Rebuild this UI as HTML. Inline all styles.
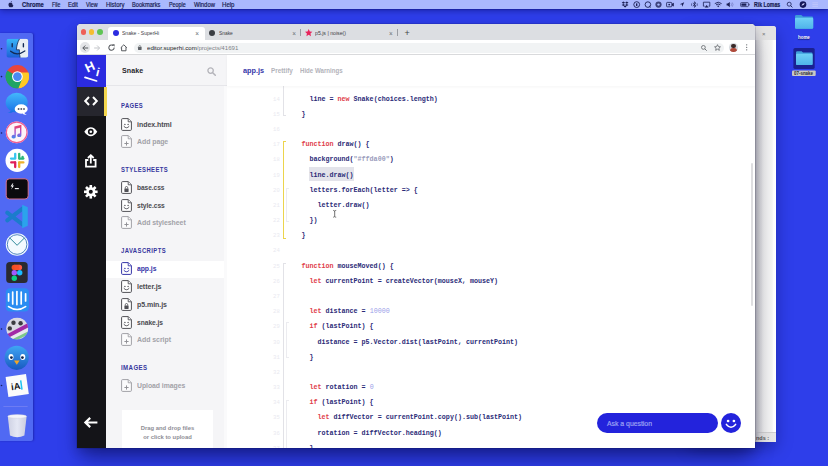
<!DOCTYPE html>
<html lang="en">
<head>
<meta charset="utf-8">
<title>Snake - SuperHi</title>
<style>
*{box-sizing:border-box;margin:0;padding:0}
html,body{width:828px;height:466px;overflow:hidden}
body{position:relative;background:#2e3eea;font-family:"Liberation Sans",sans-serif;color:#222;-webkit-font-smoothing:antialiased}
.abs{position:absolute}
svg{position:absolute;overflow:visible}
/* ---------- menu bar ---------- */
#menubar{position:absolute;left:0;top:0;width:828px;height:8.6px;background:#aab8fd;box-shadow:0 .5px 1.5px rgba(0,0,70,.5),0 2px 6px rgba(0,0,80,.4);z-index:5}
#menubar span{position:absolute;top:-.4px;height:9px;line-height:9px;font-size:6.4px;color:#171b50;white-space:nowrap;-webkit-text-stroke:.18px #171b50}
#menubar span.b{font-weight:bold}

.dl{position:absolute;font-size:5.6px;line-height:7.6px;font-weight:bold;white-space:nowrap}
/* ---------- dock ---------- */
#dock{position:absolute;left:0;top:33px;width:32.8px;height:407.6px;background:#5069f3;border-radius:0 2px 2px 0;box-shadow:.5px 0 2px rgba(0,0,90,.35)}
.dot{position:absolute;left:1px;width:1.6px;height:1.6px;border-radius:50%;background:#151a55}
/* ---------- windows ---------- */
#backwin{position:absolute;left:690px;top:26px;width:86px;height:416px;background:#ececec;border-radius:3px 3px 0 0;box-shadow:0 6px 16px rgba(5,8,60,.35)}

#bwtab{position:absolute;left:0;top:0;width:86px;height:14px;background:#e3e3e3;border-radius:3px 3px 0 0}
#bwtab span{position:absolute;left:72px;top:4px;font-size:6px;line-height:8px;color:#777}
#bwbody{position:absolute;left:0;top:14px;width:86px;height:402px;background:linear-gradient(90deg,#cdcdcd 0,#cdcdcd 65.5px,#d8d8d8 67px,#ededed 74px,#f4f4f4 82px,#fdfdfd 83.5px,#fff 86px)}
#bwstat{position:absolute;left:0;top:406px;width:86px;height:10px;background:linear-gradient(90deg,#ccc 0,#ccc 66px,#e2e2e2 70px,#e8e8e8 86px);border-top:.5px solid #cfcfcf}
#bwstat span{position:absolute;left:66px;top:1px;font-size:5.5px;line-height:8px;color:#555;font-weight:bold}
#win{position:absolute;left:76.7px;top:24.4px;width:678.8px;height:423.3px;background:#fff;border-radius:4px 4px 0 0;box-shadow:0 3px 11px rgba(0,0,50,.2),0 14px 20px -4px rgba(0,0,50,.45),0 0 0 .5px rgba(0,0,40,.22);overflow:hidden}
#tabbar{position:absolute;left:0;top:0;width:679px;height:16.2px;background:#dcdee2}
#toolbar{position:absolute;left:0;top:15.6px;width:679px;height:15.1px;background:#fff;border-bottom:1px solid #d9dadc}
.tabt{position:absolute;top:0;height:17px;line-height:19.2px;font-size:5.6px;color:#3c4043;white-space:nowrap}

.tl{position:absolute;top:4.8px;width:5.8px;height:5.8px;border-radius:50%}
#acttab{position:absolute;left:31px;top:3px;width:97.5px;height:13.4px;background:#fff;border-radius:3px 3px 0 0}
.fav{position:absolute;top:6.1px;width:6px;height:6px;border-radius:50%}
.tabx{position:absolute;top:0;height:17px;line-height:20.4px;font-size:6.4px;color:#6a6e73}
.tsep{position:absolute;top:5px;width:.6px;height:7px;background:#9a9da3}
#omni{position:absolute;left:57.6px;top:2.6px;width:590px;height:10px;border-radius:5px;background:#f1f3f4}
#url{position:absolute;left:70px;top:0;height:15px;line-height:15.2px;font-size:6.1px;color:#202124;white-space:nowrap}
#url i{font-style:normal;color:#7d8186}
#avatar{position:absolute;left:652.6px;top:3.2px;width:8.6px;height:8.6px;border-radius:50%;background:#d7dbe0;overflow:hidden}
#avatar i{position:absolute;left:2.2px;top:1px;width:4.2px;height:4.2px;border-radius:50%;background:#3a2a28}
#avatar b{position:absolute;left:1px;top:5px;width:6.6px;height:5px;border-radius:3px 3px 0 0;background:#b04a3a}
/* ---------- app ---------- */
#app{position:absolute;left:0;top:30.7px;width:679px;height:393px;background:#fff;overflow:hidden}
#rail{position:absolute;left:0;top:0;width:29.5px;height:393px;background:#141418}
#logo{position:absolute;left:0;top:0;width:29.8px;height:31.5px;background:#2b2be0}
#railact{position:absolute;left:0;top:31.5px;width:30.8px;height:29.8px;background:#26262e;border-right:3px solid #f3d64e}
#side{position:absolute;left:29.5px;top:0;width:121px;height:393px;background:#f5f5f7}
#sidehead{position:absolute;left:0;top:0;width:121px;height:31px;border-bottom:1px solid #e6e6ea}
#sidescroll{position:absolute;left:118px;top:31px;width:3px;height:362px;background:#fafafb}
.sec{position:absolute;left:15.3px;font-size:7.2px;font-weight:bold;color:#37379e;letter-spacing:.5px;line-height:8px;white-space:nowrap}
.it{position:absolute;margin-top:.4px;left:30.8px;font-size:7.9px;font-weight:bold;color:#4a4a4f;line-height:10px;white-space:nowrap;letter-spacing:-.05px}
.it.add{color:#a2a2a8}
.fi{left:15px;width:11px;height:13px}
#main{position:absolute;left:150.5px;top:0;width:528.5px;height:393px;background:#fff}
#mainhead{position:absolute;left:0;top:0;width:528.5px;height:31px;background:#fff;box-shadow:0 1px 3px rgba(0,0,30,.045);z-index:2}
.mh{position:absolute;top:0;height:31px;line-height:31.4px;font-size:7.4px;font-weight:bold;color:#b3b3ba;white-space:nowrap}

#proj{position:absolute;left:15.5px;top:0;height:31px;line-height:31.4px;font-size:8px;font-weight:bold;color:#26262b;letter-spacing:.1px}
#actrow{position:absolute;left:0;top:205.5px;width:118px;height:17.3px;background:#fff}
.it.act{color:#3535a8}
#drop{position:absolute;left:15.5px;top:355.2px;width:91px;height:40px;background:#fff}
#drop span{position:absolute;left:0;width:91px;text-align:center;font-size:6.2px;line-height:8px;font-weight:bold;color:#8d8d94;white-space:nowrap}
/*FIT*/
#m0{transform:scaleX(0.902);transform-origin:0 50%}
#m1{transform:scaleX(0.815);transform-origin:0 50%}
#m2{transform:scaleX(0.899);transform-origin:0 50%}
#m3{transform:scaleX(0.844);transform-origin:0 50%}
#m4{transform:scaleX(0.930);transform-origin:0 50%}
#m5{transform:scaleX(0.888);transform-origin:0 50%}
#m6{transform:scaleX(0.844);transform-origin:0 50%}
#m7{transform:scaleX(0.919);transform-origin:0 50%}
#m8{transform:scaleX(0.950);transform-origin:0 50%}
#m9{transform:scaleX(0.810);transform-origin:0 50%}
#t0{transform:scaleX(0.904);transform-origin:0 50%}
#t1{transform:scaleX(0.869);transform-origin:0 50%}
#t2{transform:scaleX(0.926);transform-origin:0 50%}
#url{transform:scaleX(0.998);transform-origin:0 50%}
#h0{transform:scaleX(0.925);transform-origin:0 50%}
#h1{transform:scaleX(0.860);transform-origin:0 50%}
#h2{transform:scaleX(0.828);transform-origin:0 50%}
#proj{transform:scaleX(0.885);transform-origin:0 50%}
#s1{transform:scaleX(0.818);transform-origin:0 50%}
#s2{transform:scaleX(0.822);transform-origin:0 50%}
#s3{transform:scaleX(0.822);transform-origin:0 50%}
#s4{transform:scaleX(0.848);transform-origin:0 50%}
#i1{transform:scaleX(0.890);transform-origin:0 50%}
#i2{transform:scaleX(0.877);transform-origin:0 50%}
#i3{transform:scaleX(0.831);transform-origin:0 50%}
#i4{transform:scaleX(0.842);transform-origin:0 50%}
#i5{transform:scaleX(0.878);transform-origin:0 50%}
#i6{transform:scaleX(0.862);transform-origin:0 50%}
#i7{transform:scaleX(0.901);transform-origin:0 50%}
#i8{transform:scaleX(0.888);transform-origin:0 50%}
#i9{transform:scaleX(0.846);transform-origin:0 50%}
#i10{transform:scaleX(0.882);transform-origin:0 50%}
#i11{transform:scaleX(0.869);transform-origin:0 50%}
#d1{transform:scaleX(0.947);transform-origin:50% 50%}
#d2{transform:scaleX(0.949);transform-origin:50% 50%}
#f1{transform:scaleX(0.791);transform-origin:0 50%}
#f2{transform:scaleX(0.793);transform-origin:0 50%}
#aq{transform:scaleX(0.980);transform-origin:0 50%}
/*/FIT*/

.fold{position:absolute;left:56.3px;width:1px;background:#e2e2e7}
.fold i{position:absolute;left:0;width:2.6px;height:1px;background:#e2e2e7}
.fold.y,.fold.y i{background:#ecd44c}
.fold.in{left:59.3px;background:#ececf0}
.fold.in i{background:#ececf0;width:2.5px}
#sel{position:absolute;left:82px;top:111.6px;width:44.6px;height:14.4px;background:#e3e3ea}
#vscroll{position:absolute;left:524.3px;top:108.2px;width:2px;height:142.5px;border-radius:1px;background:#dedee0}

#ask{position:absolute;left:369.5px;top:358px;width:121px;height:20.2px;border-radius:10px;background:#2323dc}
#ask span{position:absolute;left:10.4px;top:0;line-height:22.4px;font-size:7px;color:#9ca1f4;white-space:nowrap;-webkit-text-stroke:.2px #9ca1f4}
#smile{position:absolute;left:493.5px;top:358px;width:20px;height:20px;border-radius:50%;background:#2323dc}
/* code */
#code{position:absolute;left:0;top:0;width:528.5px;height:393px;font-family:"Liberation Mono",monospace;font-weight:bold;font-size:6.7px;color:#2b2b78}
.ln{position:absolute;left:74.2px;height:15.18px;line-height:15.18px;white-space:pre}
.no{position:absolute;left:42.6px;width:10px;text-align:right;height:15.18px;line-height:15.18px;color:#e9e9ef;font-weight:normal;font-size:5.6px}
.k{color:#e0404a}.s{color:#9a9cbc}.n{color:#9aa0e8;font-weight:normal}
</style>
</head>
<body>
<svg width="0" height="0" style="position:absolute"><defs>
<symbol id="f-smile" viewBox="0 0 11 13"><path d="M1.6 .6H7.3L10.4 3.7V11.4Q10.4 12.4 9.4 12.4H1.6Q.6 12.4 .6 11.4V1.6Q.6 .6 1.6 .6Z" fill="#fff" stroke="#505056" stroke-width="1" stroke-linejoin="round"/><path d="M7.2 .7V3.8H10.3" fill="#f5f5f7" stroke="#505056" stroke-width="0.90" stroke-linejoin="round"/><circle cx="3.9" cy="6.5" r=".72" fill="#505056"/><circle cx="7.1" cy="6.5" r=".72" fill="#505056"/><path d="M3 8.5Q5.5 11.3 8 8.5" fill="none" stroke="#505056" stroke-width=".95" stroke-linecap="round"/></symbol>
<symbol id="f-smile-b" viewBox="0 0 11 13"><path d="M1.6 .6H7.3L10.4 3.7V11.4Q10.4 12.4 9.4 12.4H1.6Q.6 12.4 .6 11.4V1.6Q.6 .6 1.6 .6Z" fill="#fff" stroke="#3535a8" stroke-width="1" stroke-linejoin="round"/><path d="M7.2 .7V3.8H10.3" fill="#fff" stroke="#3535a8" stroke-width="0.90" stroke-linejoin="round"/><circle cx="3.9" cy="6.5" r=".72" fill="#3535a8"/><circle cx="7.1" cy="6.5" r=".72" fill="#3535a8"/><path d="M3 8.5Q5.5 11.3 8 8.5" fill="none" stroke="#3535a8" stroke-width=".95" stroke-linecap="round"/></symbol>
<symbol id="f-lock" viewBox="0 0 11 13"><path d="M1.6 .6H7.3L10.4 3.7V11.4Q10.4 12.4 9.4 12.4H1.6Q.6 12.4 .6 11.4V1.6Q.6 .6 1.6 .6Z" fill="#fff" stroke="#505056" stroke-width="1" stroke-linejoin="round"/><path d="M7.2 .7V3.8H10.3" fill="#f5f5f7" stroke="#505056" stroke-width="0.90" stroke-linejoin="round"/><rect x="3.4" y="7.4" width="4.2" height="3.6" rx=".4" fill="#505056"/><path d="M4.3 7.6V6.7A1.2 1.2 0 0 1 6.7 6.7V7.6" fill="none" stroke="#505056" stroke-width=".85"/></symbol>
<symbol id="f-plus" viewBox="0 0 11 13"><path d="M1.6 .6H7.3L10.4 3.7V11.4Q10.4 12.4 9.4 12.4H1.6Q.6 12.4 .6 11.4V1.6Q.6 .6 1.6 .6Z" fill="#fbfbfc" stroke="#9c9ca2" stroke-width="0.95" stroke-linejoin="round"/><path d="M7.2 .7V3.8H10.3" fill="#f5f5f7" stroke="#9c9ca2" stroke-width="0.85" stroke-linejoin="round"/><path d="M5.5 6.4V10.6M3.4 8.5H7.6" stroke="#8e8e94" stroke-width=".95"/></symbol>
</defs></svg>
<!-- MENUBAR -->
<div id="menubar">
<svg style="left:0;top:0;width:828px;height:9px" viewBox="0 0 828 9">
<g fill="#1b1f55" stroke="none">
<!-- apple -->
<path d="M11.2 2.4C11.8 2.3 12.3 1.7 12.3 1C11.7 1.1 11.1 1.6 11.2 2.4ZM12.9 4.1C12.6 3.3 11.9 2.6 11.2 2.9C10.6 2.5 9.2 2.6 8.9 4.2C8.7 5.6 9.6 7.3 10.3 7.3C10.8 7.3 10.9 7 11.4 7C11.9 7 12 7.3 12.5 7.3C13.1 7.2 13.6 6.3 13.8 5.6C13.1 5.4 12.8 4.7 12.9 4.1Z" transform="translate(-.4 0)"/>
<!-- dropbox -->
<path d="M623.4 1.6L625.1 2.7L623.4 3.8L621.7 2.7ZM626.8 1.6L628.5 2.7L626.8 3.8L625.1 2.7ZM623.4 3.9L625.1 5L623.4 6.1L621.7 5ZM626.8 3.9L628.5 5L626.8 6.1L625.1 5ZM625.1 5.5L626.6 6.5L625.1 7.5L623.6 6.5Z"/>
<circle cx="636.7" cy="4.6" r="2.9" fill="none" stroke="#1b1f55" stroke-width=".9"/><rect x="636" y="3.2" width="1.4" height="2.8" rx=".5"/>
<circle cx="647.9" cy="4.6" r="2.8" fill="none" stroke="#1b1f55" stroke-width=".9"/><path d="M649.2 6L650.6 7.4" stroke="#1b1f55" stroke-width=".9"/>
<circle cx="658.5" cy="4.6" r="3.1" fill="#3d427c"/><circle cx="658.5" cy="4.6" r="1.2" fill="#aab8fd"/>
<rect x="666.6" y="2.4" width="5.2" height="4.4" rx=".7" fill="none" stroke="#1b1f55" stroke-width=".8"/><path d="M672 3.8L673.8 2.8V6.4L672 5.4Z"/><circle cx="669.2" cy="4.6" r=".9"/>
<path d="M684.2 2.2L679.8 4.2L681.9 4.6L682.3 6.8Z"/>
<path d="M692.8 3L696 6L694.4 7.4V1.8L696 3.2L692.8 6.2" fill="none" stroke="#1b1f55" stroke-width=".7"/><path d="M691.6 3.4V5.8M697.2 3.4V5.8" stroke="#1b1f55" stroke-width=".6" fill="none"/>
<path d="M704.6 6.2H703.4V2.2H709.8V6.2H708.6" fill="none" stroke="#1b1f55" stroke-width=".8"/><path d="M706.6 5L708.6 7.4H704.6Z"/>
<path d="M714.8 3.6Q718.2 .8 721.6 3.6M716 4.9Q718.2 3.1 720.4 4.9" fill="none" stroke="#1b1f55" stroke-width=".9"/><path d="M717.1 6L718.2 7.2L719.3 6Q718.2 5.2 717.1 6Z"/>
<path d="M726.6 3.6H727.8L729.8 2V7.2L727.8 5.6H726.6Z"/><path d="M731 3.2Q732.2 4.6 731 6M732.2 2.4Q734 4.6 732.2 6.8" fill="none" stroke="#6a70b8" stroke-width=".6"/>
<rect x="740.6" y="2.6" width="7.8" height="4" rx=".8" fill="none" stroke="#1b1f55" stroke-width=".7"/><rect x="741.4" y="3.4" width="5" height="2.4" rx=".3"/><rect x="748.8" y="3.8" width=".7" height="1.6"/>
<circle cx="789.2" cy="4.2" r="2" fill="none" stroke="#1b1f55" stroke-width=".8"/><path d="M790.6 5.6L792.4 7.4" stroke="#1b1f55" stroke-width=".9"/>
<circle cx="803" cy="4.6" r="3.3" fill="#14175a"/><path d="M801.4 5.4Q803 2.6 804.8 3.6Q803.6 5.8 801.4 5.4Z" fill="#cfd3ff"/>
<path d="M812.4 2.8H818M812.4 4.6H818M812.4 6.4H818" stroke="#c3c8fa" stroke-width=".8" fill="none"/>
</g></svg>
<span id="m0" class="b" style="left:21.7px">Chrome</span>
<span id="m1" style="left:51.6px">File</span>
<span id="m2" style="left:67.8px">Edit</span>
<span id="m3" style="left:85.8px">View</span>
<span id="m4" style="left:105.5px">History</span>
<span id="m5" style="left:131.9px">Bookmarks</span>
<span id="m6" style="left:168.7px">People</span>
<span id="m7" style="left:193.6px">Window</span>
<span id="m8" style="left:221.7px">Help</span>
<span id="m9" class="b" style="left:753.6px">Rik Lomas</span>
</div>
<!-- DESKTOP ICONS -->
<svg style="left:785px;top:10px;width:43px;height:70px" viewBox="785 10 43 70">
<defs><linearGradient id="gFold" x1="0" y1="0" x2="0" y2="1"><stop offset="0" stop-color="#6fd0f6"/><stop offset="1" stop-color="#4fb4ea"/></linearGradient></defs>
<path d="M795 16.4Q795 15 796.4 15H801.4L803 16.6H811.8Q813.2 16.6 813.2 18V27.4Q813.2 28.8 811.8 28.8H796.4Q795 28.8 795 27.4Z" fill="#3f9fdc"/><rect x="795" y="17.8" width="18.2" height="11" rx="1.2" fill="url(#gFold)"/>
<rect x="793.4" y="47.9" width="21.3" height="21" rx="1.6" fill="#1a2192"/>
<path d="M796 52.4Q796 51.2 797.2 51.2H801.6L803 52.6H811.4Q812.6 52.6 812.6 53.8V63.8Q812.6 65 811.4 65H797.2Q796 65 796 63.8Z" fill="#3f9fdc"/><rect x="796" y="53.8" width="16.6" height="11.2" rx="1.1" fill="url(#gFold)"/>
<rect x="792" y="70.4" width="23.7" height="5.5" rx="1" fill="#c9c9c4"/>
</svg>
<span id="f1" class="dl" style="left:798.2px;top:33.5px;color:#fff;text-shadow:0 .5px 1px rgba(0,0,40,.7)">home</span>
<span id="f2" class="dl" style="left:794.4px;top:69.9px;color:#2c2e36">07-snake</span>
<!-- DOCK -->
<div id="dock"></div>
<svg id="dockicons" style="left:0;top:0;width:40px;height:466px" viewBox="0 0 40 466">
<defs>
<linearGradient id="gFinder" x1="0" y1="0" x2="0" y2="1"><stop offset="0" stop-color="#38b6f8"/><stop offset="1" stop-color="#1c5fd6"/></linearGradient>
<linearGradient id="gMsg" x1="0" y1="0" x2="0" y2="1"><stop offset="0" stop-color="#43b8fc"/><stop offset="1" stop-color="#1a72e6"/></linearGradient>
<linearGradient id="gNote" x1="0" y1="0" x2="0" y2="1"><stop offset="0" stop-color="#f0405a"/><stop offset=".55" stop-color="#b050d0"/><stop offset="1" stop-color="#3a8cf0"/></linearGradient>
<linearGradient id="gBird" x1="0" y1="0" x2="0" y2="1"><stop offset="0" stop-color="#3fa6f4"/><stop offset="1" stop-color="#1858c0"/></linearGradient>
<linearGradient id="gTrash" x1="0" y1="0" x2="1" y2="0"><stop offset="0" stop-color="#d4d6e2"/><stop offset=".5" stop-color="#eceef4"/><stop offset="1" stop-color="#d0d2de"/></linearGradient>
<clipPath id="cFinder"><rect x="6.4" y="38.7" width="21.9" height="19" rx="2.6"/></clipPath>
<clipPath id="cReel"><circle cx="17.1" cy="328.4" r="11"/></clipPath>
</defs>
<!-- running dots -->
<g fill="#161c60"><circle cx="1.5" cy="48.7" r=".8"/><circle cx="1.5" cy="76.6" r=".8"/><circle cx="1.5" cy="133" r=".8"/><circle cx="1.5" cy="329" r=".8"/><circle cx="1.5" cy="385.5" r=".8"/></g>
<!-- finder -->
<g clip-path="url(#cFinder)"><rect x="6.4" y="38.7" width="21.9" height="19" fill="url(#gFinder)"/><path d="M19.6 38.7C17.6 42 16.6 46 16.4 49.8H19.4C19.2 52.6 19.5 55.4 20.2 57.7H28.3V38.7Z" fill="#e9eef4"/><path d="M10.6 51.2Q17 56.6 24.8 51" fill="none" stroke="#132a55" stroke-width="1.3" stroke-linecap="round"/><path d="M12.2 43.8V46.8M23.4 43.8V46.8" stroke="#132a55" stroke-width="1.4" stroke-linecap="round"/><path d="M19.6 38.7C17.6 42 16.6 46 16.4 49.8H19.4C19.2 52.6 19.5 55.4 20.2 57.7" fill="none" stroke="#132a55" stroke-width=".8"/></g>
<!-- chrome -->
<g transform="translate(17.4 76.6)"><circle r="11.6" fill="#e8453c"/><path d="M0 0L-10.05 -5.8A11.6 11.6 0 0 0 0 11.6Z" fill="#1fa463" transform="rotate(0)"/><path d="M-10.05 -5.8A11.6 11.6 0 0 0 1.2 11.54L5.6 3.2L0 0Z" fill="#1fa463"/><path d="M1.2 11.54A11.6 11.6 0 0 0 10.9 -4H0L4.6 2.7Z" fill="#fdc926"/><path d="M1.2 11.54L5.4 2.6L10.9 -4A11.6 11.6 0 0 1 1.2 11.54Z" fill="#fdc926"/><circle r="5.4" fill="#fff"/><circle r="4.3" fill="#4a8af4"/></g>
<!-- messages -->
<ellipse cx="16.7" cy="102.6" rx="11" ry="9.8" fill="url(#gMsg)"/><path d="M11 110.4Q9.8 112.6 7.6 113Q11.4 113.4 13.6 111.4Z" fill="#1a72e6"/>
<ellipse cx="21.2" cy="109" rx="6.5" ry="4.7" fill="#fff"/><path d="M24 112.4Q25 114.4 26.8 114.6Q24 115 22.4 113.4Z" fill="#fff"/>
<g fill="#555a66"><circle cx="18.6" cy="109" r=".95"/><circle cx="21.3" cy="109" r=".95"/><circle cx="24" cy="109" r=".95"/></g>
<!-- itunes -->
<circle cx="16.7" cy="132.4" r="10.9" fill="#fdf4f8"/><circle cx="16.7" cy="132.4" r="10.3" fill="none" stroke="#ee5d92" stroke-width="1.2"/>
<path d="M14.4 126.4L21.4 124.8V135.2A2.1 1.8 0 1 1 20 133.6V127.8L15.8 128.8V136.6A2.1 1.8 0 1 1 14.4 135Z" fill="url(#gNote)"/>
<!-- slack -->
<circle cx="17.1" cy="160.4" r="11.6" fill="#fff"/>
<g stroke-width="2.3" stroke-linecap="round" fill="none"><path d="M15.2 153.8V158" stroke="#36c5f0"/><path d="M11 158.6H15.2" stroke="#36c5f0"/><path d="M19.2 153.8V158.6" stroke="#2eb67d"/><path d="M19.4 158.6H23.4" stroke="#2eb67d" transform="translate(0 -3.6) translate(0 3.6)"/><path d="M22.6 156.8V158.2" stroke="#2eb67d"/><path d="M11.2 162.4H15" stroke="#e01e5a"/><path d="M15.2 162.4V167" stroke="#e01e5a"/><path d="M19.2 162.6V167" stroke="#ecb22e"/><path d="M19.2 162.4H23.4" stroke="#ecb22e"/></g>
<!-- terminal -->
<rect x="6.2" y="178.8" width="22" height="20.2" rx="3.2" fill="#0b0b0e" stroke="#d6728e" stroke-width="1"/>
<path d="M12.4 183.4L10.6 186.6H12.2L11.2 189.4L14 185.6H12.2L13.4 183.4Z" fill="#fff"/><path d="M14.8 188.6H18.8" stroke="#fff" stroke-width="1.1"/>
<!-- vscode -->
<path d="M22.8 208.4L7.2 220.4M22.8 224.6L7.2 212.6" stroke="#1b7ccc" stroke-width="4" stroke-linecap="round" fill="none"/><path d="M22.2 204.8L27.8 207.2V225.8L22.2 228.2Z" fill="#2ba3ec"/><path d="M22.2 212.6L17 216.5L22.2 220.4Z" fill="#5069f3"/>
<!-- airmail -->
<circle cx="17.1" cy="244.5" r="11.3" fill="#f3faff"/><circle cx="17.1" cy="244.5" r="9.8" fill="none" stroke="#3f78b8" stroke-width=".9"/><path d="M9.4 237.6L17.1 245.3L24.8 237.6" fill="none" stroke="#2f8a9a" stroke-width="1"/>
<!-- figma -->
<rect x="6.2" y="261.9" width="21.5" height="21.2" rx="3.6" fill="#2a2a30"/>
<circle cx="14.3" cy="267.4" r="2.7" fill="#f24e1e"/><circle cx="19.4" cy="267.4" r="2.7" fill="#ff5a45"/><rect x="14.3" y="264.7" width="5.1" height="5.4" fill="#f7502c"/><circle cx="14.3" cy="272.8" r="2.7" fill="#a259ff"/><circle cx="19.7" cy="272.8" r="2.7" fill="#1abcfe"/><circle cx="14.3" cy="278.2" r="2.7" fill="#0acf83"/>
<!-- intercom -->
<rect x="5.8" y="288.2" width="23.2" height="23.2" rx="4.2" fill="#2a8df2"/>
<g stroke="#fff" stroke-width="1.7" stroke-linecap="round" fill="none"><path d="M8.6 293.8V301"/><path d="M12.7 292V304"/><path d="M16.9 291.6V304.6"/><path d="M21.2 292V304"/><path d="M25.6 293.8V301"/><path d="M8.6 306.6Q17.1 312.4 25.6 306.6"/></g>
<!-- film reel -->
<g clip-path="url(#cReel)"><circle cx="17.1" cy="328.4" r="11" fill="#d9d9e2"/><path d="M5 335.4L29 322.6V327L5 339.6Z" fill="#a22aa6"/><path d="M5 340L29 327.4V331L5 343.6Z" fill="#e8e8ee"/><path d="M8 341.4L29 331V334L10 343.6Z" fill="#7cc88a"/><path d="M12 343L29 334.6V337.4L14 345Z" fill="#9ad0e0"/></g>
<g fill="#3c3c40"><circle cx="13.5" cy="322.8" r="2.2"/><circle cx="20.6" cy="323.3" r="2.2"/><circle cx="9.8" cy="328.4" r="2.2"/></g>
<!-- tweetbot -->
<circle cx="16.7" cy="357.8" r="12.1" fill="url(#gBird)"/><ellipse cx="11" cy="357" rx="2.5" ry="3" fill="#fff"/><ellipse cx="22.8" cy="357" rx="2.5" ry="3" fill="#fff"/><circle cx="11.4" cy="357.6" r="1.4" fill="#10244a"/><circle cx="22.4" cy="357.6" r="1.4" fill="#10244a"/><path d="M14 360.6H19.6L16.8 364.8Z" fill="#f5a623"/>
<!-- iA -->
<g transform="rotate(-8 17.2 385.5)"><rect x="6.9" y="375.4" width="20.6" height="20.2" fill="#fbfbfb"/><text x="11" y="389.4" font-family="Liberation Sans, sans-serif" font-weight="bold" font-size="9.2" fill="#111">iA</text><rect x="20.6" y="381" width="1.5" height="9.2" fill="#1ec3f0"/></g>
<!-- separator & trash -->
<rect x="3.4" y="406.1" width="24.2" height=".7" fill="#7a86f2"/>
<path d="M7.8 416.4Q17.2 413.6 26.6 416.4L24.4 435.4Q17.2 439 10 435.4Z" fill="url(#gTrash)" opacity=".95"/><ellipse cx="17.2" cy="416.4" rx="9.4" ry="1.9" fill="#f4f5fa" stroke="#c9cbd8" stroke-width=".4"/>
</svg>
<!-- BACK WINDOW -->
<div id="backwin"><div id="bwtab"><span>×</span></div><div id="bwbody"></div><div id="bwstat"><span>nds :</span></div></div>
<!-- MAIN WINDOW -->
<div id="win">
<div id="tabbar">
<div class="tl" style="left:4px;background:#ee5f57"></div><div class="tl" style="left:12px;background:#f5bd30"></div><div class="tl" style="left:20.1px;background:#5fc554"></div>
<div id="acttab"></div>
<div class="fav" style="left:36px;background:#2b2be0"></div>
<span id="t0" class="tabt" style="left:45.6px">Snake - SuperHi</span>
<span class="tabx" style="left:118.5px">×</span>
<div class="fav" style="left:132.8px;background:#3a3d42"></div>
<span id="t1" class="tabt" style="left:142px">Snake</span>
<span class="tabx" style="left:215.5px">×</span>
<div class="tsep" style="left:223px"></div>
<svg style="left:228.4px;top:5px;width:7.4px;height:7.2px" viewBox="0 0 10 9.6"><path d="M5 0L6.5 3.3L10 3.7L7.4 6.1L8.1 9.6L5 7.8L1.9 9.6L2.6 6.1L0 3.7L3.5 3.3Z" fill="#e8245c"/></svg>
<span id="t2" class="tabt" style="left:238.7px">p5.js | noise()</span>
<span class="tabx" style="left:312.2px">×</span>
<div class="tsep" style="left:320.4px"></div>
<span class="tabx" style="left:327.8px;font-size:9px;line-height:19.4px;color:#44474b">+</span>
</div>
<div id="toolbar">
<div style="position:absolute;left:3.2px;top:2.4px;width:10.4px;height:10.4px;border-radius:50%;background:#e4e5e8"></div>
<svg style="left:5.2px;top:4.6px;width:6.4px;height:6px" viewBox="0 0 6.4 6"><path d="M6.2 3H.9M3.3 .5L.8 3L3.3 5.5" fill="none" stroke="#55585d" stroke-width="1"/></svg>
<svg style="left:17.8px;top:4.6px;width:6.4px;height:6px" viewBox="0 0 6.4 6"><path d="M.2 3H5.5M3.1 .5L5.6 3L3.1 5.5" fill="none" stroke="#c3c5c9" stroke-width="1"/></svg>
<svg style="left:31.8px;top:4.2px;width:7.2px;height:7.2px" viewBox="0 0 7 7"><path d="M6 3.5A2.6 2.6 0 1 1 5.1 1.6" fill="none" stroke="#55585d" stroke-width="1"/><path d="M3.9 .2H6.4V2.7Z" fill="#55585d"/></svg>
<svg style="left:43px;top:4px;width:7.6px;height:7.4px" viewBox="0 0 7.6 7.4"><path d="M.7 3.8L3.8 .8L6.9 3.8M1.6 3.2V6.8H6V3.2" fill="none" stroke="#55585d" stroke-width="1"/></svg>
<div id="omni"></div>
<svg style="left:61.3px;top:5px;width:3.6px;height:5px" viewBox="0 0 3.6 5"><rect x="0" y="2" width="3.6" height="3" rx=".4" fill="#5f6368"/><path d="M.8 2.2V1.6A1 1 0 0 1 2.8 1.6V2.2" fill="none" stroke="#5f6368" stroke-width=".7"/></svg>
<span id="url">editor.superhi.com<i>/projects/41691</i></span>
<svg style="left:624.6px;top:4.6px;width:6px;height:6px" viewBox="0 0 6 6"><circle cx="2.4" cy="2.4" r="1.9" fill="none" stroke="#5f6368" stroke-width=".8"/><path d="M3.8 3.8L5.7 5.7" stroke="#5f6368" stroke-width=".9"/></svg>
<svg style="left:637.4px;top:4px;width:7px;height:6.8px" viewBox="0 0 10 9.6"><path d="M5 .9L6.3 3.7L9.2 4L7 6L7.6 9L5 7.4L2.4 9L3 6L.8 4L3.7 3.7Z" fill="none" stroke="#5f6368" stroke-width="1.1" stroke-linejoin="round"/></svg>
<div id="avatar"><i></i><b></b></div>
<svg style="left:669.8px;top:4.4px;width:1.4px;height:6.6px" viewBox="0 0 1.4 6.6"><circle cx=".7" cy=".8" r=".65" fill="#5f6368"/><circle cx=".7" cy="3.3" r=".65" fill="#5f6368"/><circle cx=".7" cy="5.8" r=".65" fill="#5f6368"/></svg>
</div>
<div id="app">
<div id="main">
<div id="code">
<!--CODE-->
<div class="fold" style="top:31px;height:30px"><i style="bottom:0"></i></div>
<div class="fold y" style="top:85.7px;height:98.3px"><i style="top:0"></i><i style="bottom:0"></i></div>
<div class="fold" style="top:207.5px;height:186px"><i style="top:0"></i></div>
<div class="fold in" style="top:133px;height:34px"><i style="top:0"></i><i style="bottom:0"></i></div>
<div class="fold in" style="top:267px;height:36.4px"><i style="top:0"></i><i style="bottom:0"></i></div>
<div class="fold in" style="top:345px;height:50px"><i style="top:0"></i></div>
<div id="sel"></div>
<svg style="left:106.2px;top:155.2px;width:3.4px;height:7.6px" viewBox="0 0 3.4 7.6"><path d="M.2 .4Q1.2 .4 1.7 1Q2.2 .4 3.2 .4M.2 7.2Q1.2 7.2 1.7 6.6Q2.2 7.2 3.2 7.2M1.7 1V6.6" fill="none" stroke="#333" stroke-width=".7"/></svg>

<div id="vscroll"></div>
<div class="no" style="top:36.61px">14</div><div class="ln" style="top:36.61px">  line = <span class="k">new</span> Snake(choices.length)</div>
<div class="no" style="top:51.79px">15</div><div class="ln" style="top:51.79px">}</div>
<div class="no" style="top:66.97px">16</div>
<div class="no" style="top:82.15px">17</div><div class="ln" style="top:82.15px"><span class="k">function</span> draw() {</div>
<div class="no" style="top:97.33px">18</div><div class="ln" style="top:97.33px">  background(<span class="s">"#ffda00"</span>)</div>
<div class="no" style="top:112.51px">19</div><div class="ln" style="top:112.51px">  line.draw()</div>
<div class="no" style="top:127.69px">20</div><div class="ln" style="top:127.69px">  letters.forEach(letter =&gt; {</div>
<div class="no" style="top:142.87px">21</div><div class="ln" style="top:142.87px">    letter.draw()</div>
<div class="no" style="top:158.05px">22</div><div class="ln" style="top:158.05px">  })</div>
<div class="no" style="top:173.23px">23</div><div class="ln" style="top:173.23px">}</div>
<div class="no" style="top:188.41px">24</div>
<div class="no" style="top:203.59px">25</div><div class="ln" style="top:203.59px"><span class="k">function</span> mouseMoved() {</div>
<div class="no" style="top:218.77px">26</div><div class="ln" style="top:218.77px">  <span class="k">let</span> currentPoint = createVector(mouseX, mouseY)</div>
<div class="no" style="top:233.95px">27</div>
<div class="no" style="top:249.13px">28</div><div class="ln" style="top:249.13px">  <span class="k">let</span> distance = <span class="n">10000</span></div>
<div class="no" style="top:264.31px">29</div><div class="ln" style="top:264.31px">  <span class="k">if</span> (lastPoint) {</div>
<div class="no" style="top:279.49px">30</div><div class="ln" style="top:279.49px">    distance = p5.Vector.dist(lastPoint, currentPoint)</div>
<div class="no" style="top:294.67px">31</div><div class="ln" style="top:294.67px">  }</div>
<div class="no" style="top:309.85px">32</div>
<div class="no" style="top:325.03px">33</div><div class="ln" style="top:325.03px">  <span class="k">let</span> rotation = <span class="n">0</span></div>
<div class="no" style="top:340.21px">34</div><div class="ln" style="top:340.21px">  <span class="k">if</span> (lastPoint) {</div>
<div class="no" style="top:355.39px">35</div><div class="ln" style="top:355.39px">    <span class="k">let</span> diffVector = currentPoint.copy().sub(lastPoint)</div>
<div class="no" style="top:370.57px">36</div><div class="ln" style="top:370.57px">    rotation = diffVector.heading()</div>
<div class="no" style="top:385.75px">37</div><div class="ln" style="top:385.75px">  }</div>
<!--/CODE-->
</div>
<div id="ask"><span id="aq">Ask a question</span></div>
<div id="smile"><svg style="left:0;top:0;width:20px;height:20px" viewBox="0 0 20 20"><circle cx="7.1" cy="8" r="1.35" fill="#fff"/><circle cx="12.9" cy="8" r="1.35" fill="#fff"/><path d="M5.4 11.4Q10 17 14.6 11.4" fill="none" stroke="#fff" stroke-width="1.5" stroke-linecap="round"/></svg></div>
<div id="mainhead">
<span id="h0" class="mh" style="left:16px;color:#3535a8;font-weight:bold;font-size:7.9px">app.js</span>
<span id="h1" class="mh" style="left:44.3px">Prettify</span>
<span id="h2" class="mh" style="left:73.2px">Hide Warnings</span>
</div>
</div>
<div id="side">
<div id="sidescroll"></div>
<div id="sidehead"><span id="proj">Snake</span>
<svg style="left:101px;top:11.5px;width:9px;height:9px" viewBox="0 0 9 9"><circle cx="3.6" cy="3.6" r="2.7" fill="none" stroke="#b4b4ba" stroke-width="1.3"/><path d="M5.7 5.7L8.3 8.3" stroke="#b4b4ba" stroke-width="1.5" stroke-linecap="round"/></svg>
</div>
<div id="s1" class="sec" style="top:46.7px">PAGES</div>
<svg class="fi" style="top:62.5px" viewBox="0 0 11 13"><use href="#f-smile"/></svg><div id="i1" class="it " style="top:64.1px">index.html</div>
<svg class="fi" style="top:80.1px" viewBox="0 0 11 13"><use href="#f-plus"/></svg><div id="i2" class="it add" style="top:81.7px">Add page</div>
<div id="s2" class="sec" style="top:110.7px">STYLESHEETS</div>
<svg class="fi" style="top:125.9px" viewBox="0 0 11 13"><use href="#f-lock"/></svg><div id="i3" class="it " style="top:127.5px">base.css</div>
<svg class="fi" style="top:143.7px" viewBox="0 0 11 13"><use href="#f-smile"/></svg><div id="i4" class="it " style="top:145.3px">style.css</div>
<svg class="fi" style="top:161.4px" viewBox="0 0 11 13"><use href="#f-plus"/></svg><div id="i5" class="it add" style="top:163.0px">Add stylesheet</div>
<div id="s3" class="sec" style="top:191.7px">JAVASCRIPTS</div>
<div id="actrow"></div>
<svg class="fi" style="top:207.1px" viewBox="0 0 11 13"><use href="#f-smile-b"/></svg><div id="i6" class="it act" style="top:208.7px">app.js</div>
<svg class="fi" style="top:224.9px" viewBox="0 0 11 13"><use href="#f-smile"/></svg><div id="i7" class="it " style="top:226.5px">letter.js</div>
<svg class="fi" style="top:242.6px" viewBox="0 0 11 13"><use href="#f-lock"/></svg><div id="i8" class="it " style="top:244.2px">p5.min.js</div>
<svg class="fi" style="top:260.5px" viewBox="0 0 11 13"><use href="#f-smile"/></svg><div id="i9" class="it " style="top:262.1px">snake.js</div>
<svg class="fi" style="top:278.0px" viewBox="0 0 11 13"><use href="#f-plus"/></svg><div id="i10" class="it add" style="top:279.6px">Add script</div>
<div id="s4" class="sec" style="top:308.7px">IMAGES</div>
<svg class="fi" style="top:323.8px" viewBox="0 0 11 13"><use href="#f-plus"/></svg><div id="i11" class="it add" style="top:325.4px">Upload images</div>
<div id="drop"><span id="d1" style="top:14.1px">Drag and drop files</span><span id="d2" style="top:22.8px">or click to upload</span></div>
</div>
<div id="rail"><div id="logo">
<svg style="left:0;top:0;width:29.5px;height:31px" viewBox="0 0 29.5 31"><text x="0" y="0" transform="translate(10.4 17.8) rotate(-25)" font-family="Liberation Sans, sans-serif" font-weight="bold" font-size="12.8" fill="#fff" letter-spacing="1.2">H</text><text x="0" y="0" transform="translate(18.2 20.8) rotate(14)" font-family="Liberation Sans, sans-serif" font-weight="bold" font-size="12" fill="#fff">i</text><path d="M8 22.4L19.6 26" stroke="#fff" stroke-width="1.7" stroke-linecap="round"/></svg>
</div><div id="railact"></div>
<svg style="left:7px;top:41.2px;width:14px;height:10px" viewBox="0 0 14 10"><path d="M5 1L1.2 5L5 9M9 1L12.8 5L9 9" fill="none" stroke="#fff" stroke-width="2" stroke-linejoin="miter"/></svg>
<svg style="left:7px;top:71.5px;width:13.6px;height:9.4px" viewBox="0 0 13.6 9.4"><path d="M.3 4.7Q3.3 .2 6.8 .2T13.3 4.7Q10.3 9.2 6.8 9.2T.3 4.7Z" fill="#fff"/><circle cx="6.8" cy="4.7" r="2.9" fill="#141418"/><circle cx="6.8" cy="4.7" r="1.3" fill="#fff"/></svg>
<svg style="left:8.6px;top:99.4px;width:11.6px;height:13.6px" viewBox="0 0 11.6 13.6"><path d="M3.4 6H1V12.6H10.6V6H8.2" fill="none" stroke="#fff" stroke-width="1.8"/><path d="M5.8 9.4V1.6M2.9 4L5.8 1.2L8.7 4" fill="none" stroke="#fff" stroke-width="1.8"/></svg>
<svg style="left:7.4px;top:130.4px;width:13.6px;height:13.6px" viewBox="-6.8 -6.8 13.6 13.6"><g fill="#fff"><circle r="4.6"/><g id="gt"><rect x="-1.3" y="-6.8" width="2.6" height="13.6"/></g><use href="#gt" transform="rotate(45)"/><use href="#gt" transform="rotate(90)"/><use href="#gt" transform="rotate(135)"/></g><circle r="2" fill="#141418"/></svg>
<svg style="left:7.2px;top:362.4px;width:14px;height:11px" viewBox="0 0 14 11"><path d="M13.4 5.5H2M6.2 .9L1.4 5.5L6.2 10.1" fill="none" stroke="#fff" stroke-width="2.2"/></svg>
</div>
</div>
</div>
</body>
</html>
